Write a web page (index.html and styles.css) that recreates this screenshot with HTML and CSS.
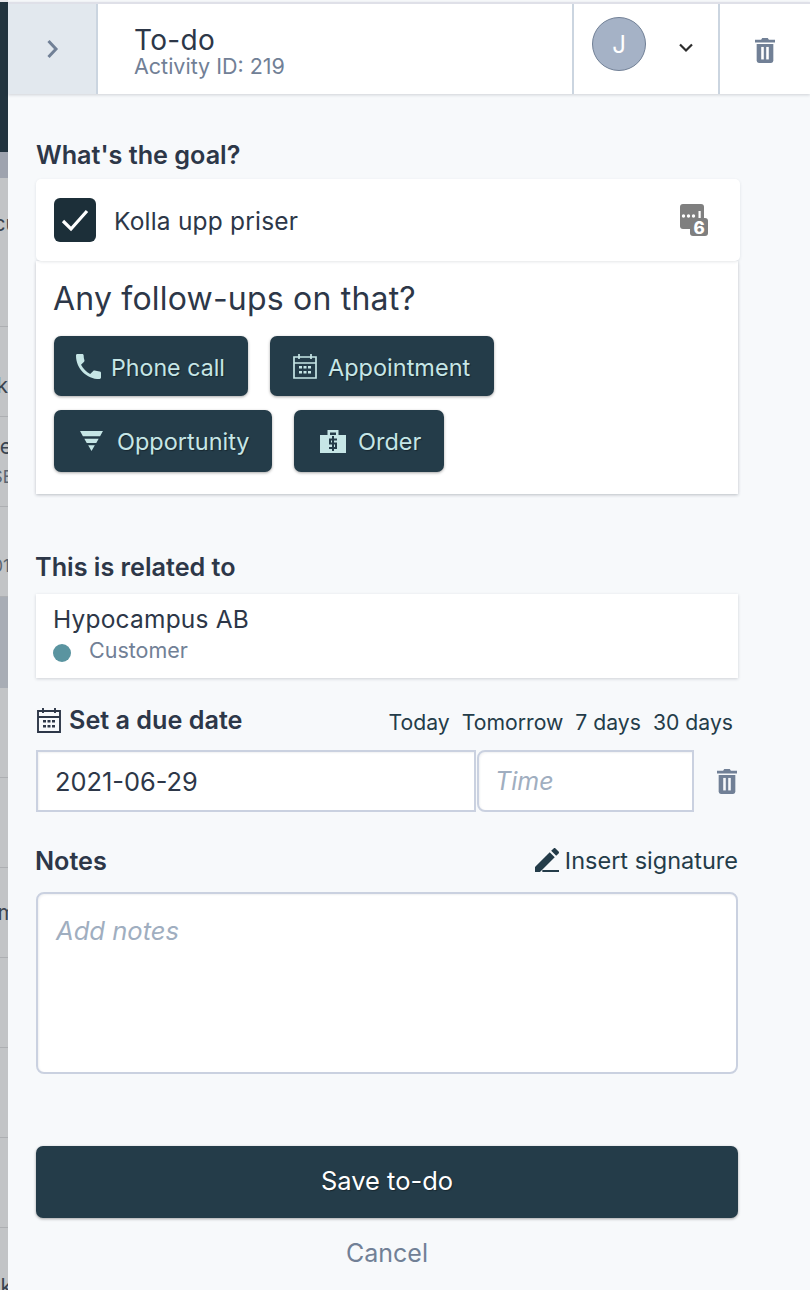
FILE: index.html
```html
<!DOCTYPE html>
<html lang="en">
<head>
<meta charset="utf-8">
<title>To-do</title>
<link rel="stylesheet" href="styles.css">
</head>
<body>
<div class="page">
  <aside class="strip">
    <div class="s-dark"></div>
    <div class="s-band"></div>
    <div class="s-row s-first"><span class="frag f-cu">cu</span></div>
    <div class="s-row"><span class="frag f-k">k</span></div>
    <div class="s-row"><span class="frag f-te">te</span><span class="frag frag-sm">SE</span></div>
    <div class="s-row"><span class="frag frag-top">01</span></div>
    <div class="s-row s-sel"></div>
    <div class="s-row"></div>
    <div class="s-row"></div>
    <div class="s-row"><span class="frag f-m">m</span></div>
    <div class="s-row"></div>
    <div class="s-row"></div>
    <div class="s-row"></div>
    <div class="s-row s-last"><span class="frag frag-end">k</span></div>
  </aside>
  <main class="panel">
    <header class="head">
      <div class="back">
        <svg class="back-ic" viewBox="0 0 14 20"><path d="M2.500 2l7.500 8-7.500 8" fill="none" stroke="#718096" stroke-width="3"/></svg>
      </div>
      <div class="title-wrap">
        <div class="title">To-do</div>
        <div class="subtitle">Activity ID: 219</div>
      </div>
      <div class="owner">
        <div class="avatar">J</div>
        <svg class="chev" viewBox="0 0 16 12"><path d="M2 2.500l6 6 6-6" fill="none" stroke="#2d2d2d" stroke-width="2.200"/></svg>
      </div>
      <div class="head-trash">
        <svg class="trash" viewBox="1 2 18 21" preserveAspectRatio="none"><path d="M1 3.500h5.500L7.500 2h5l1 1.500H19v2.200H1z" fill="#718096"/><path d="M2.500 7h15v14a2 2 0 0 1-2 2h-11a2 2 0 0 1-2-2z" fill="#718096"/><rect x="6.600" y="9.500" width="2.300" height="10.500" fill="#fff"/><rect x="11.100" y="9.500" width="2.300" height="10.500" fill="#fff"/></svg>
      </div>
    </header>

    <div class="body">
      <h2 class="label label-goal">What's the goal?</h2>
      <div class="goal-card">
        <div class="check">
          <svg class="check-ic" viewBox="0 0 30 26"><path d="M3 14l8 8L27 4" fill="none" stroke="#fff" stroke-width="3.200"/></svg>
        </div>
        <div class="goal-text">Kolla upp priser</div>
        <svg class="chat" viewBox="0 0 28 32">
          <rect x="0" y="0" width="24" height="25" rx="3" fill="#7f7f7f"/>
          <rect x="10" y="14" width="18" height="18" rx="3" fill="#7f7f7f"/>
          <circle cx="3.500" cy="12" r="1.700" fill="#fff"/><circle cx="8.500" cy="12" r="1.700" fill="#fff"/><circle cx="13.500" cy="12" r="1.700" fill="#fff"/>
          <rect x="18.500" y="7" width="2.200" height="7" fill="#fff"/>
          <text x="19" y="30" class="chat-num">6</text>
        </svg>
      </div>
      <div class="follow-card">
        <div class="follow-title">Any follow-ups on that?</div>
        <div class="btn-row">
          <div class="btn btn-phone">
            <svg class="ic ic-phone" viewBox="3 3 18 18"><path fill="#c6e6e6" d="M6.620 10.790c1.440 2.830 3.760 5.140 6.590 6.590l2.200-2.200c.27-.27.67-.36 1.020-.24 1.120.37 2.330.57 3.570.57.55 0 1 .45 1 1V20c0 .55-.45 1-1 1-9.390 0-17-7.610-17-17 0-.55.45-1 1-1h3.500c.55 0 1 .45 1 1 0 1.250.2 2.450.57 3.570.11.35.03.74-.25 1.020l-2.200 2.200z"/></svg>
            <span>Phone call</span>
          </div>
          <div class="btn btn-appt">
            <svg class="ic ic-cal" viewBox="0 0 24 26"><path fill="none" stroke="#c6e6e6" stroke-width="1.700" d="M1 4h22v21H1zM1 10h22M6 1v5M18 1v5"/><path fill="#c6e6e6" d="M6 13h3v2.500H6zM10.500 13h3v2.500h-3zM15 13h3v2.500h-3zM6 18h3v2.500H6zM10.500 18h3v2.500h-3zM15 18h3v2.500h-3z"/></svg>
            <span>Appointment</span>
          </div>
        </div>
        <div class="btn-row">
          <div class="btn btn-opp">
            <svg class="ic ic-fun" viewBox="0 0 24 22"><path fill="#c6e6e6" d="M0 0h24l-3 5.500H3zM4.500 8h15l-2.500 4.500H7zM8.500 15h7l-3.500 6z"/></svg>
            <span>Opportunity</span>
          </div>
          <div class="btn btn-order">
            <svg class="ic ic-order" viewBox="0 0 26 23"><path fill="#c6e6e6" d="M0 5h7.500V0h11v5H26v18H0z"/><path fill="#243c49" d="M10 2.500h6V5h-6z"/><path fill="none" stroke="#243c49" stroke-width="2" d="M17 9.500h-7v4h6v4.500H9M13 6v15"/></svg>
            <span>Order</span>
          </div>
        </div>
      </div>

      <h2 class="label label-related">This is related to</h2>
      <div class="rel-card">
        <div class="rel-name">Hypocampus AB</div>
        <div class="rel-type"><span class="dot"></span><span>Customer</span></div>
      </div>

      <div class="due-head">
        <div class="due-label">
          <svg class="due-ic" viewBox="0 0 24 26"><path fill="none" stroke="#2d3748" stroke-width="1.900" d="M1 4h22v21H1zM1 10h22M6 1v5M18 1v5"/><path fill="#2d3748" d="M6 13h3v2.500H6zM10.500 13h3v2.500h-3zM15 13h3v2.500h-3zM6 18h3v2.500H6zM10.500 18h3v2.500h-3zM15 18h3v2.500h-3z"/></svg>
          <span>Set a due date</span>
        </div>
        <div class="due-links"><span>Today</span><span>Tomorrow</span><span>7 days</span><span>30 days</span></div>
      </div>
      <div class="due-row">
        <div class="field field-date">2021-06-29</div>
        <div class="field field-time">Time</div>
        <svg class="trash trash-due" viewBox="1 2 18 21" preserveAspectRatio="none"><path d="M1 3.500h5.500L7.500 2h5l1 1.500H19v2.200H1z" fill="#718096"/><path d="M2.500 7h15v14a2 2 0 0 1-2 2h-11a2 2 0 0 1-2-2z" fill="#718096"/><rect x="6.600" y="9.500" width="2.300" height="10.500" fill="#f7f9fb"/><rect x="11.100" y="9.500" width="2.300" height="10.500" fill="#f7f9fb"/></svg>
      </div>

      <div class="notes-head">
        <h2 class="label">Notes</h2>
        <div class="sig">
          <svg class="sig-ic" viewBox="3 3 18 18"><path fill="#243c49" d="M3 17.250V21h3.750L17.810 9.940l-3.750-3.750L3 17.250zM20.710 7.040c.39-.39.39-1.020 0-1.410l-2.340-2.340c-.39-.39-1.020-.39-1.410 0l-1.830 1.830 3.750 3.750 1.830-1.830z"/><rect x="8.500" y="19.500" width="12.500" height="1.500" fill="#243c49"/></svg>
          <span>Insert signature</span>
        </div>
      </div>
      <div class="notes">Add notes</div>

      <div class="save">Save to-do</div>
      <div class="cancel">Cancel</div>
    </div>
  </main>
</div>
</body>
</html>
```

FILE: styles.css
```css
* { box-sizing: border-box; }
html, body { margin: 0; padding: 0; }
body { font-family: Inter, "Liberation Sans", sans-serif; color: #2d3748; background: #f7f9fb; }
.page { display: flex; width: 810px; height: 1290px; overflow: hidden; }

/* clipped list behind the panel */
.strip { width: 8px; flex: none; display: flex; flex-direction: column; background: #c2c4c6; font-size: 22px; color: #2d3748; }
.s-dark { height: 152px; flex: none; background: #22343f; border-top: 2px solid #e6e6ea; }
.s-band { height: 26px; flex: none; background: #9ea3ae; }
.s-row { height: 90px; flex: none; border-bottom: 1px solid #adafb2; position: relative; overflow: hidden; }
.s-first { height: 149px; }
.s-sel { height: 91px; background: #a8adb5; border-bottom: none; }
.s-last { height: 63px; border-bottom: none; }
.frag { position: absolute; right: -4px; top: 26px; line-height: 26px; white-space: nowrap; font-size: 21px; color: #3a4450; }
.f-cu { top: 33px; right: -10px; }
.f-k { top: 46px; right: 0; }
.f-te { top: 17px; right: -4px; }
.frag-sm { top: 47px; right: -5px; font-size: 17px; color: #5a6470; }
.frag-top { top: 46px; right: -2px; font-size: 17px; color: #5a6470; }
.f-m { top: 32px; right: -8px; }
.frag-end { top: 46px; right: -4px; }

.panel { width: 802px; flex: none; display: flex; flex-direction: column; background: #f7f9fb; }

/* header */
.head { margin-top: 2px; height: 92px; flex: none; display: flex; background: #fff; border-top: 2px solid #dfe0e8; box-shadow: 0 1px 3px rgba(45, 55, 72, .2); }
.back { width: 90px; flex: none; display: flex; align-items: center; justify-content: center; background: #e2e8ee; border-right: 2px solid #cbd5e0; }
.back-ic { width: 14px; height: 20px; margin-left: 2px; margin-bottom: 1px; }
.title-wrap { flex: 1; padding: 21px 0 0 36px; }
.title { font-size: 28px; line-height: 30px; letter-spacing: .3px; color: #2d3748; }
.subtitle { font-size: 21.500px; line-height: 22px; color: #718096; }
.owner { width: 148px; flex: none; display: flex; align-items: flex-start; border-left: 2px solid #cbd5e0; border-right: 2px solid #cbd5e0; padding: 13px 0 0 18px; }
.avatar { width: 54px; height: 54px; border-radius: 50%; background: #a5b2c6; border: 1px solid #718096; color: #fff; font-size: 24px; display: flex; align-items: center; justify-content: center; }
.chev { width: 16px; height: 12px; margin: 25px 0 0 32px; }
.head-trash { width: 90px; flex: none; padding: 34px 0 0 35px; }
.trash { width: 20px; height: 25px; display: block; }

.body { width: 702px; margin-left: 28px; display: flex; flex-direction: column; }

.label { margin: 0 0 0 -1px; font-size: 25.200px; line-height: 30px; font-weight: 600; color: #2d3748; }
.label-goal { margin-top: 46px; margin-left: 0; }

/* goal card */
.goal-card { margin-top: 9px; width: 704px; height: 82px; background: #fff; border-radius: 5px; box-shadow: 0 1px 3px rgba(45, 55, 72, .12); display: flex; align-items: center; padding: 0 32px 0 18px; position: relative; z-index: 1; }
.check { width: 42px; height: 44px; border-radius: 6px; background: #1c2f39; display: flex; align-items: center; justify-content: center; }
.check-ic { width: 30px; height: 26px; }
.goal-text { flex: 1; margin: 2px 0 0 18px; font-size: 24.500px; letter-spacing: .2px; }
.chat { width: 28px; height: 32px; }
.chat-num { font-family: Inter, sans-serif; font-size: 17px; font-weight: 800; fill: #fff; text-anchor: middle; }

.follow-card { height: 233px; background: #fff; box-shadow: 0 1px 3px rgba(45, 55, 72, .3); padding: 20px 17px 0 18px; display: flex; flex-direction: column; }
.follow-title { font-size: 32px; line-height: 36px; letter-spacing: .2px; color: #2d3748; margin: 0 0 19px -1px; }
.btn-row { display: flex; gap: 22px; margin-bottom: 14px; }
.btn { display: flex; align-items: center; border-radius: 7px; background: #243c49; color: #c6e6e6; font-size: 23.500px; text-shadow: 1px 1px 1px rgba(0, 0, 0, .35); box-shadow: 0 1px 3px rgba(0, 0, 0, .35); }
.btn span { margin-top: 2px; }
.btn-phone { width: 194px; height: 60px; padding-left: 22px; gap: 10px; font-size: 23.200px; }
.btn-phone span { margin-top: 4px; }
.btn-appt { width: 224px; height: 60px; padding-left: 23px; gap: 11px; }
.btn-opp { width: 218px; height: 62px; padding-left: 26px; gap: 14px; }
.btn-opp span, .btn-order span { margin-top: 0; }
.btn-order { width: 150px; height: 62px; padding-left: 26px; gap: 12px; }
.ic-phone { width: 25px; height: 25px; }
.ic-cal { width: 24px; height: 26px; }
.ic-fun { width: 23px; height: 21px; }
.ic-order { width: 26px; height: 23px; }

/* related */
.label-related { margin-top: 58px; }
.rel-card { margin-top: 12px; height: 84px; background: #fff; box-shadow: 0 1px 3px rgba(45, 55, 72, .2); padding: 10px 17px 0; }
.rel-name { font-size: 24.500px; line-height: 30px; letter-spacing: .2px; }
.rel-type { display: flex; align-items: center; gap: 18px; font-size: 21.500px; line-height: 28px; margin-top: 2px; color: #718096; }
.dot { width: 18px; height: 18px; border-radius: 50%; background: #5a94a0; margin-top: 5px; }

/* due */
.due-head { margin-top: 27px; display: flex; justify-content: space-between; align-items: center; height: 30px; }
.due-label { display: flex; align-items: center; gap: 7px; font-size: 25.200px; font-weight: 600; }
.due-ic { width: 26px; height: 26px; }
.due-links { display: flex; gap: 12px; font-size: 21.200px; color: #243c49; padding-right: 5px; margin-top: 4px; }
.due-row { margin-top: 15px; display: flex; align-items: center; }
.field { height: 62px; background: #fff; border: 2px solid #cad1e0; box-shadow: inset 1px 1px 2px rgba(45, 55, 72, .07); display: flex; align-items: center; font-size: 25px; }
.field-date { width: 440px; padding-left: 17px; font-size: 25.400px; color: #2d3748; }
.field-time { width: 217px; margin-left: 1px; padding-left: 16px; border-radius: 8px 0 0 8px; font-style: italic; color: #a0aec0; }
.trash-due { margin-left: 23px; }

/* notes */
.notes-head { margin-top: 34px; height: 30px; display: flex; justify-content: space-between; align-items: center; }
.sig { display: flex; align-items: center; gap: 6px; font-size: 23.500px; color: #243c49; margin-top: -2px; }
.sig-ic { width: 24px; height: 24px; }
.notes { margin-top: 16px; height: 182px; background: #fff; border: 2px solid #cad1e0; box-shadow: inset 1px 1px 2px rgba(45, 55, 72, .07); border-radius: 8px; padding: 21px 18px; font-size: 25.600px; line-height: 32px; font-style: italic; color: #a0aec0; }

.save { margin-top: 72px; height: 72px; border-radius: 7px; background: #243c49; color: #fff; display: flex; align-items: center; justify-content: center; font-size: 25.500px; padding-bottom: 3px; text-shadow: 1px 1px 1px rgba(0, 0, 0, .35); box-shadow: 0 1px 3px rgba(0, 0, 0, .35); }
.cancel { margin-top: 19px; text-align: center; font-size: 25px; line-height: 32px; color: #718096; }
```
